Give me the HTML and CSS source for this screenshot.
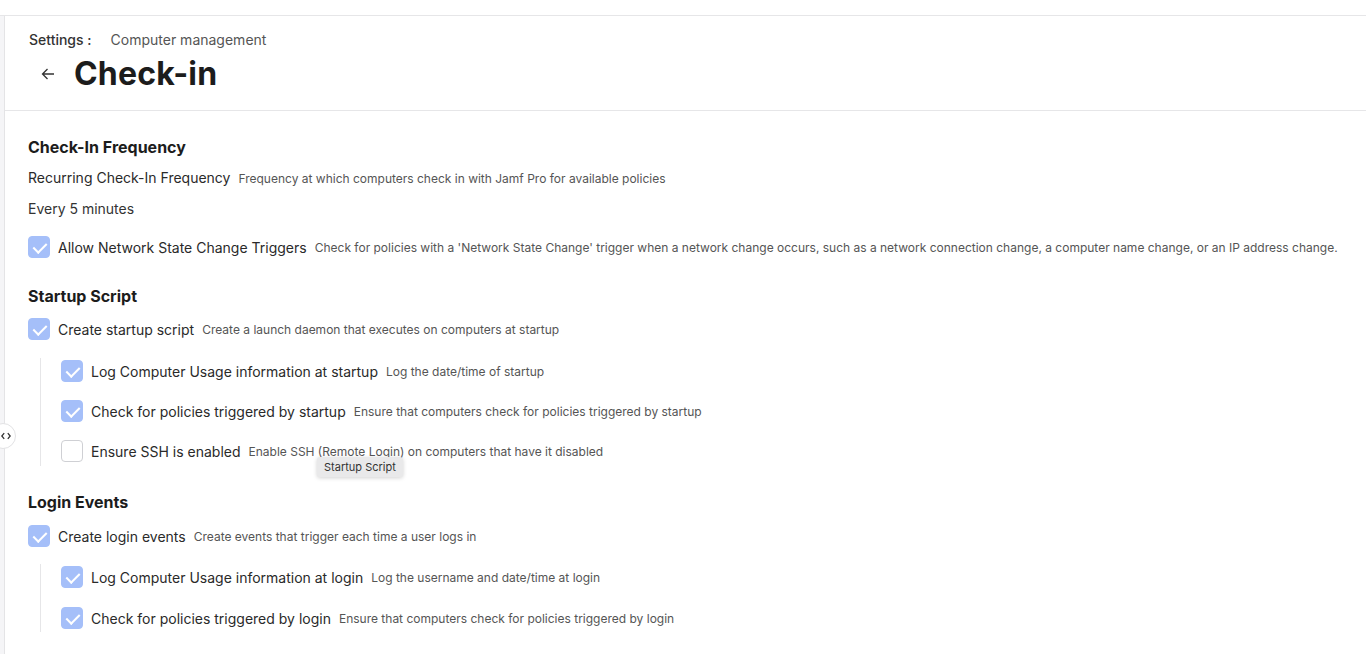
FILE: index.html
```html
<!DOCTYPE html>
<html>
<head>
<meta charset="utf-8">
<link rel="stylesheet" href="styles.css">
</head>
<body>
<div class="topbar"></div>
<div class="app">
  <div class="sidebar"></div>
  <button class="toggle" aria-label="Toggle sidebar">
    <svg width="10" height="8" viewBox="0 0 10 8"><path d="M3.2 1.2 L0.8 4 L3.2 6.8 M6.8 1.2 L9.2 4 L6.8 6.8" fill="none" stroke="#333" stroke-width="1.3"/></svg>
  </button>
  <main class="main">
    <header class="header">
      <div class="crumbs"><span class="crumb-root">Settings :</span><span class="crumb">Computer management</span></div>
      <div class="title-row">
        <svg class="back" width="16" height="16" viewBox="0 0 16 16"><path d="M14 8 H2.5 M7.5 3 L2.5 8 L7.5 13" fill="none" stroke="#333" stroke-width="1.3"/></svg>
        <h1 class="title">Check-in</h1>
      </div>
    </header>
    <section class="content">
      <h2 class="sec-h sec-first">Check-In Frequency</h2>
      <div class="field"><span class="label">Recurring Check-In Frequency</span><span class="desc">Frequency at which computers check in with Jamf Pro for available policies</span></div>
      <div class="value">Every 5 minutes</div>
      <div class="row row-network"><span class="cb on"></span><span class="label">Allow Network State Change Triggers</span><span class="desc">Check for policies with a 'Network State Change' trigger when a network change occurs, such as a network connection change, a computer name change, or an IP address change.</span></div>

      <h2 class="sec-h">Startup Script</h2>
      <div class="row"><span class="cb on"></span><span class="label">Create startup script</span><span class="desc">Create a launch daemon that executes on computers at startup</span></div>
      <div class="group">
        <div class="row"><span class="cb on"></span><span class="label">Log Computer Usage information at startup</span><span class="desc">Log the date/time of startup</span></div>
        <div class="row"><span class="cb on"></span><span class="label">Check for policies triggered by startup</span><span class="desc">Ensure that computers check for policies triggered by startup</span></div>
        <div class="row"><span class="cb"></span><span class="label">Ensure SSH is enabled</span><span class="desc">Enable SSH (Remote Login) on computers that have it disabled</span></div>
      </div>

      <h2 class="sec-h sec-login">Login Events</h2>
      <div class="row row-login"><span class="cb on"></span><span class="label">Create login events</span><span class="desc">Create events that trigger each time a user logs in</span></div>
      <div class="group group-login">
        <div class="row"><span class="cb on"></span><span class="label">Log Computer Usage information at login</span><span class="desc">Log the username and date/time at login</span></div>
        <div class="row"><span class="cb on"></span><span class="label">Check for policies triggered by login</span><span class="desc">Ensure that computers check for policies triggered by login</span></div>
      </div>
    </section>
  </main>
  <div class="tooltip">Startup Script</div>
</div>
</body>
</html>
```
FILE: styles.css
```css
* { box-sizing: border-box; }
html, body { margin: 0; padding: 0; background: #fff; }
body {
  font-family: Inter, "Noto Sans", "Liberation Sans", sans-serif;
  color: #222;
  height: 654px;
  overflow: hidden;
}
.topbar {
  height: 16px;
  border-bottom: 1px solid #e6e6e8;
  background: #fff;
}
.app {
  position: relative;
  display: flex;
  height: 638px;
}
.sidebar {
  width: 5px;
  background: #f5f5f7;
  border-right: 1px solid #e4e4e6;
  flex: none;
}
.toggle {
  position: absolute;
  left: -10px;
  top: 407px;
  width: 26px;
  height: 26px;
  border-radius: 50%;
  background: #fff;
  border: 1px solid #e2e2e4;
  padding: 0 0 0 6px;
  display: flex;
  align-items: center;
  justify-content: center;
}
.main { flex: 1; }
.header {
  padding: 14px 0 16px 24px;
  border-bottom: 1px solid #e6e6e8;
}
.crumbs {
  display: flex;
  gap: 19px;
  font-size: 14px;
  line-height: 20px;
  color: #555;
}
.crumb-root { color: #333; font-weight: 500; }
.title-row {
  display: flex;
  align-items: center;
  margin-top: 4px;
  padding-left: 11px;
}
.back { margin-right: 18px; }
.title {
  margin: 0;
  font-size: 32px;
  line-height: 40px;
  font-weight: 700;
  color: #1c1c1c;
  letter-spacing: 0.2px;
}
.content {
  padding: 24px 0 0 23px;
}
.sec-h {
  margin: 26px 0 0;
  font-size: 16px;
  line-height: 24px;
  font-weight: 700;
  color: #1c1c1c;
}
.sec-first { margin-top: 0; }
.sec-login { margin-top: 24px; }
.field {
  margin-top: 9px;
  display: flex;
  align-items: baseline;
  line-height: 20px;
}
.value {
  margin-top: 10px;
  font-size: 14px;
  line-height: 20px;
  color: #333;
}
.label {
  font-size: 14px;
  color: #2a2a2a;
  white-space: nowrap;
}
.desc {
  margin-left: 8px;
  font-size: 12px;
  color: #555;
  white-space: nowrap;
}
.row {
  display: flex;
  align-items: center;
  height: 22px;
  margin-top: 10px;
}
.row-network { margin-top: 17px; }
.row-login { margin-top: 11px; }
.row .label { margin-left: 8px; }
.cb {
  width: 22px;
  height: 22px;
  border-radius: 4px;
  border: 1px solid #cfd0d4;
  background: #fff;
  flex: none;
  position: relative;
}
.cb.on {
  background: #a5bff9;
  border-color: #a5bff9;
}
.cb.on::after {
  content: "";
  position: absolute;
  left: 7px;
  top: 3px;
  width: 6px;
  height: 11px;
  border: solid #fff;
  border-width: 0 2px 2px 0;
  transform: rotate(45deg);
}
.group {
  margin: 18px 0 0 12px;
  border-left: 1px solid #e6e6e8;
  padding: 2px 0 4px 20px;
  display: flex;
  flex-direction: column;
  gap: 18px;
}
.group .row { margin-top: 0; }
.group-login { margin-top: 17px; padding-bottom: 3px; gap: 19px; }
.tooltip {
  position: absolute;
  left: 317px;
  top: 441px;
  height: 20px;
  padding: 0 7px;
  background: #e9e9ea;
  border-radius: 3px;
  font-size: 11px;
  line-height: 20px;
  color: #333;
  box-shadow: 0 1px 4px rgba(0,0,0,0.18);
}
```
